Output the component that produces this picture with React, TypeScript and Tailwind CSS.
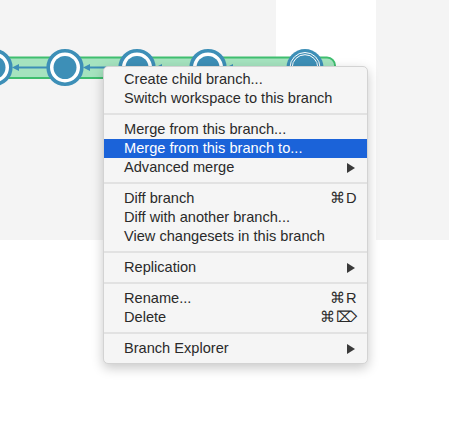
import React from 'react'

type Item =
  | { kind: 'sep' }
  | { kind: 'item'; label: string; shortcut?: string; submenu?: boolean; active?: boolean }

const items: Item[] = [
  { kind: 'item', label: 'Create child branch...' },
  { kind: 'item', label: 'Switch workspace to this branch' },
  { kind: 'sep' },
  { kind: 'item', label: 'Merge from this branch...' },
  { kind: 'item', label: 'Merge from this branch to...', active: true },
  { kind: 'item', label: 'Advanced merge', submenu: true },
  { kind: 'sep' },
  { kind: 'item', label: 'Diff branch', shortcut: '⌘D' },
  { kind: 'item', label: 'Diff with another branch...' },
  { kind: 'item', label: 'View changesets in this branch' },
  { kind: 'sep' },
  { kind: 'item', label: 'Replication', submenu: true },
  { kind: 'sep' },
  { kind: 'item', label: 'Rename...', shortcut: '⌘R' },
  { kind: 'item', label: 'Delete', shortcut: '⌘⌦' },
  { kind: 'sep' },
  { kind: 'item', label: 'Branch Explorer', submenu: true },
]

const BLUE = '#3d8fb7'
const nodes = [-6, 65, 137, 208]

function Graph() {
  return (
    <svg className="absolute left-0 top-0" width="449" height="100" viewBox="0 0 449 100">
      {/* branch band */}
      <rect x="-12" y="57.5" width="347" height="20.5" rx="8" fill="#a5e3bf" stroke="#3fbe6f" strokeWidth="2" />
      {/* changeset links */}
      {[0, 1, 2, 3].map((i) => {
        const left = i === 3 ? 208 : nodes[i]
        const right = i === 3 ? 305 : nodes[i + 1]
        const x1 = left + 18
        const x2 = right - 18
        return (
          <g key={i}>
            <line x1={x1 + 4} y1="67.5" x2={x2} y2="67.5" stroke={BLUE} strokeWidth="2" />
            <polygon points={`${x1},67.5 ${x1 + 7},64 ${x1 + 7},71`} fill={BLUE} />
          </g>
        )
      })}
      {nodes.map((cx) => (
        <g key={cx}>
          <circle cx={cx} cy="67.5" r="16.8" fill="#ffffff" stroke={BLUE} strokeWidth="3.6" />
          <circle cx={cx} cy="67.5" r="11.5" fill={BLUE} />
        </g>
      ))}
      {/* selected head */}
      <circle cx="305" cy="67.5" r="18.5" fill={BLUE} />
      <circle cx="305" cy="67.5" r="15" fill="none" stroke="#ffffff" strokeWidth="1" />
      <circle cx="305" cy="67.5" r="12.8" fill="none" stroke="#ffffff" strokeWidth="1" />
    </svg>
  )
}

function Arrow({ active }: { active?: boolean }) {
  return (
    <svg width="8" height="10" viewBox="0 0 8 10">
      <polygon points="0,0 8,5 0,10" fill={active ? '#ffffff' : '#3a3a3a'} />
    </svg>
  )
}

function ContextMenu() {
  return (
    <div className="absolute left-[103px] top-[66px] w-[265px] rounded-[5px] border border-[#d3d3d3] bg-[#f5f5f5] pt-[3px] pb-[5px] shadow-[0_4px_12px_rgba(0,0,0,0.22)]">
      {items.map((item, i) => {
        if (item.kind === 'sep') {
          return <div key={i} className="my-[5px] h-[2px] bg-[#e2e2e2]" />
        }
        return (
          <div
            key={i}
            className={
              'flex h-[19px] items-center pl-[20px] pr-[10px] text-[14.6px] leading-none ' +
              (item.active ? 'bg-[#1b63d9] text-white' : 'text-[#2a2a2a]')
            }
          >
            <span className="flex-1">{item.label}</span>
            {item.shortcut && <span className="tracking-[0.5px]">{item.shortcut}</span>}
            {item.submenu && (
              <span className="mr-[2px]">
                <Arrow active={item.active} />
              </span>
            )}
          </div>
        )
      })}
    </div>
  )
}

export default function App() {
  return (
    <div className="relative h-[427px] w-[449px] overflow-hidden bg-white font-['Liberation_Sans','Noto_Sans',sans-serif]">
      <div className="flex h-[240px]">
        <div className="w-[276px] bg-[#f4f4f4]" />
        <div className="w-[100px] bg-white" />
        <div className="flex-1 bg-[#f4f4f4]" />
      </div>
      <Graph />
      <ContextMenu />
    </div>
  )
}
